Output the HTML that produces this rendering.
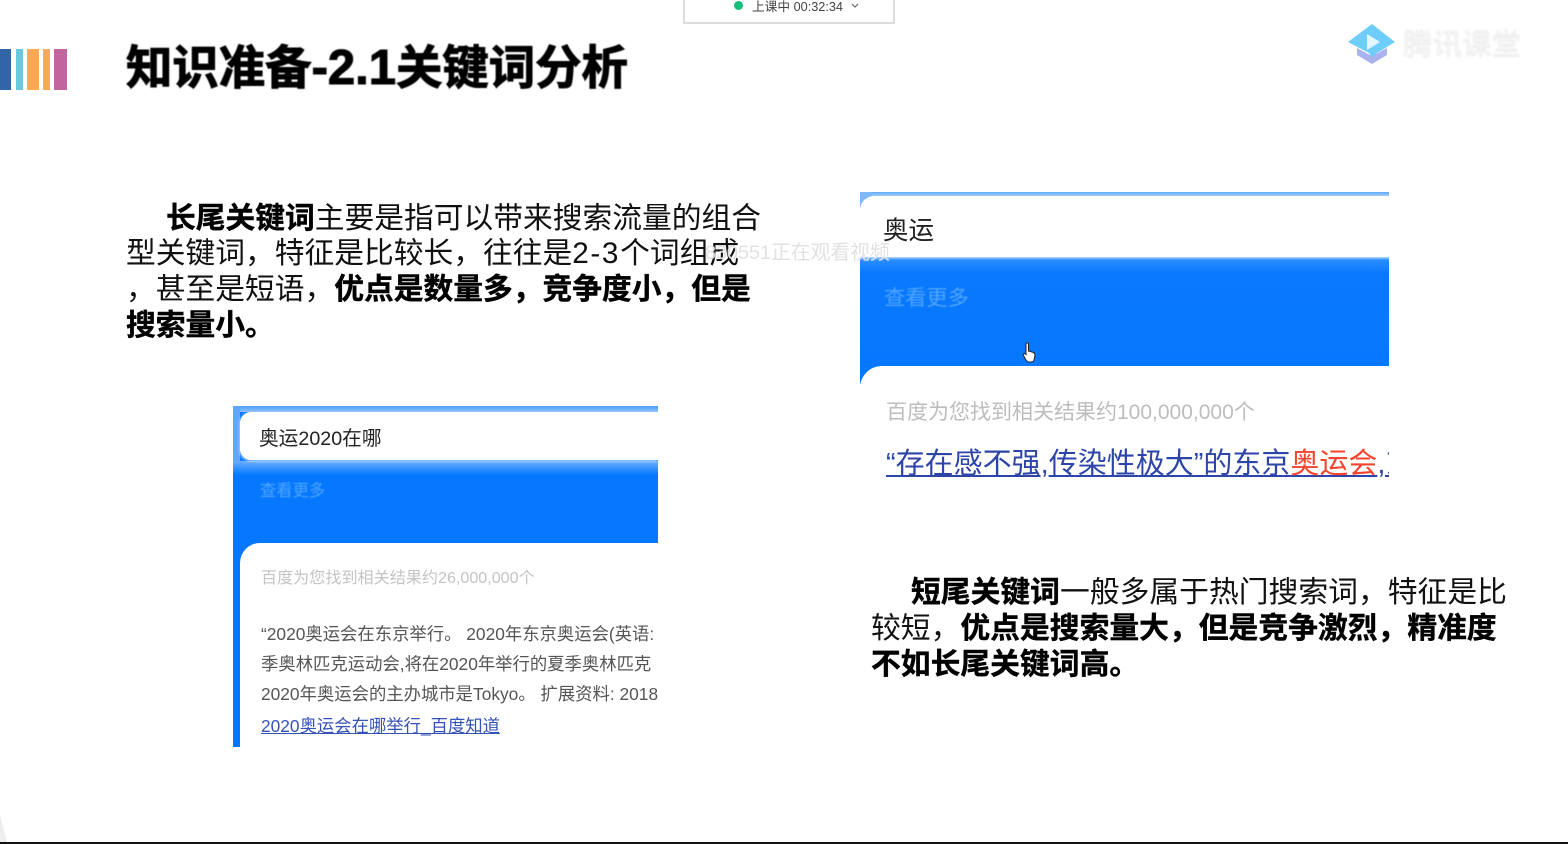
<!DOCTYPE html>
<html lang="zh">
<head>
<meta charset="utf-8">
<title>知识准备</title>
<style>
html,body{margin:0;padding:0;background:#fff}
#p{position:relative;width:1568px;height:844px;overflow:hidden;background:#fff;font-family:"Liberation Sans","Noto Sans CJK SC",sans-serif;color:#111}
.a{position:absolute;white-space:nowrap}
.t{font-size:29.75px;line-height:36px;color:#111;filter:blur(.35px)}
.t b{font-weight:700;color:#000;-webkit-text-stroke:.4px #000}
</style>
</head>
<body>
<div id="p">
  <!-- top timer -->
  <div class="a" style="left:683px;top:-3px;width:208px;height:23px;background:#fff;border:2px solid #dcdcdc"></div>
  <div class="a" style="left:734px;top:1px;width:9px;height:9px;border-radius:50%;background:#12c07c"></div>
  <div class="a" style="left:752px;top:0;font-size:12.7px;line-height:15px;color:#444;filter:blur(.3px)">上课中 00:32:34</div>
  <svg class="a" style="left:851px;top:3px" width="8" height="6" viewBox="0 0 8 6"><path d="M1 1l3 3 3-3" fill="none" stroke="#666" stroke-width="1.2"/></svg>

  <!-- colour bars -->
  <div class="a" style="left:0;top:49px;width:11px;height:41px;background:#3265a8"></div>
  <div class="a" style="left:16px;top:49px;width:7px;height:41px;background:#6cc8dc"></div>
  <div class="a" style="left:27px;top:49px;width:12px;height:41px;background:#ffa952"></div>
  <div class="a" style="left:43px;top:49px;width:7px;height:41px;background:#ffa952"></div>
  <div class="a" style="left:54px;top:49px;width:13px;height:41px;background:#c2659c"></div>

  <!-- title -->
  <div class="a" style="left:126px;top:38px;font-size:46.4px;line-height:60px;font-weight:700;color:#000;-webkit-text-stroke:1.1px #000;filter:blur(.4px)">知识准备<span style="font-size:49px">-2.1</span>关键词分析</div>

  <!-- logo -->
  <svg class="a" style="left:1347px;top:22px" width="50" height="44" viewBox="0 0 50 44">
    <path d="M10 26L25 34 40 26V33L25 42 10 33Z" fill="#a9b4ee"/>
    <path d="M25 2L48 20 30 31 25 35 22 31 1 20Z" fill="#6fcdfb"/>
    <path d="M20 12L33 20 20 28Z" fill="#e4f6ff"/>
  </svg>
  <div class="a" style="left:1403px;top:23px;font-size:29.5px;line-height:44px;color:#f4f4f4;text-shadow:0 1px 2px #e2e2e2;filter:blur(.4px)">腾讯课堂</div>

  <!-- long-tail text -->
  <div class="a t" style="left:166px;top:201px"><b>长尾关键词</b>主要是指可以带来搜索流量的组合</div>
  <div class="a t" style="left:126px;top:236px">型关键词，特征是比较长，往往是<span style="letter-spacing:1.6px">2-3</span>个词组成</div>
  <div class="a t" style="left:126px;top:272px">，甚至是短语，<b>优点是数量多，竞争度小，但是</b></div>
  <div class="a t" style="left:126px;top:308px"><b>搜索量小。</b></div>

  <!-- right card -->
  <div class="a" style="left:860px;top:192px;width:529px;height:192px;overflow:hidden;background:#fff">
    <div class="a" style="left:0;top:0;width:529px;height:5px;background:linear-gradient(#5ea8f8,#b5d6fb)"></div>
    <div class="a" style="left:0;top:0;width:12px;height:22px;background:#7db8f8"></div>
    <div class="a" style="left:0;top:4px;width:529px;height:62px;background:#fff;border-radius:14px 0 0 0"></div>
    <div class="a" style="left:0;top:65px;width:529px;height:109px;background:linear-gradient(#b9d9fb 0,#2a8dff 3px,#0a78ff 16px,#0678ff 100%)"></div>
    <div class="a" style="left:0;top:174px;width:20px;height:18px;background:#0678ff"></div>
    <div class="a" style="left:0;top:174px;width:529px;height:30px;background:#fff;border-radius:22px 0 0 0"></div>
  </div>
  <div class="a" style="left:883px;top:215px;font-size:25.5px;line-height:32px;color:#222;filter:blur(.35px)">奥运</div>
  <div class="a" style="left:884px;top:285px;font-size:21.2px;line-height:28px;color:#4fa5ff;filter:blur(.4px)">查看更多</div>
  <div class="a" style="left:886px;top:399px;font-size:21px;line-height:28px;color:#bdbdbd;filter:blur(.3px)">百度为您找到相关结果约100,000,000个</div>
  <div class="a" style="left:886px;top:446px;width:503px;overflow:hidden;font-size:29px;line-height:36px;color:#2d45a8;text-decoration:underline;filter:blur(.3px)">“存在感不强,传染性极大”的东京<span style="color:#f5452f">奥运会</span>,东京</div>

  <!-- cursor -->
  <svg class="a" style="left:1022px;top:342px" width="14" height="21" viewBox="0 0 14 21">
    <path d="M4 2c0-1.500 2.500-1.500 2.500 0V9l5 1.500c1 .5 1.500 1 1.500 2.500L12 18c-.5 1.500-1.500 2-3 2H7c-1.500 0-2.200-.7-3-2L1.500 13.500c-.8-1.500 1-2.500 2.500-1z" fill="#fff" stroke="#222" stroke-width="1"/>
  </svg>

  <!-- left card -->
  <div class="a" style="left:233px;top:406px;width:425px;height:341px;overflow:hidden;background:#0678ff">
    <div class="a" style="left:0;top:0;width:425px;height:6px;background:linear-gradient(#4f9ffb,#8cc0fc)"></div>
    <div class="a" style="left:0;top:0;width:7px;height:60px;background:#5ea8fb"></div>
    <div class="a" style="left:0;top:55px;width:425px;height:14px;background:linear-gradient(#6aaeff,#0678ff)"></div>
    <div class="a" style="left:7px;top:6px;width:418px;height:48px;background:#fff;border-radius:11px 0 0 11px;box-shadow:0 1px 3px #cfe3fb"></div>
    <div class="a" style="left:7px;top:137px;width:418px;height:204px;background:#fff;border-radius:20px 0 0 0"></div>
  </div>
  <div class="a" style="left:259px;top:425px;font-size:19.7px;line-height:28px;color:#222;filter:blur(.3px)">奥运2020在哪</div>
  <div class="a" style="left:260px;top:478px;font-size:16.3px;line-height:26px;color:#4fa5ff;filter:blur(.4px)">查看更多</div>
  <div class="a" style="left:261px;top:565px;font-size:16.1px;line-height:26px;color:#c4c4c4;filter:blur(.3px)">百度为您找到相关结果约26,000,000个</div>
  <div class="a" style="left:261px;top:621px;width:397px;overflow:hidden;font-size:17.35px;line-height:26px;color:#555;filter:blur(.3px)">“2020奥运会在东京举行。 2020年东京奥运会(英语:</div>
  <div class="a" style="left:261px;top:651px;width:397px;overflow:hidden;font-size:17.35px;line-height:26px;color:#555;filter:blur(.3px)">季奥林匹克运动会,将在2020年举行的夏季奥林匹克</div>
  <div class="a" style="left:261px;top:681px;width:397px;overflow:hidden;font-size:17.35px;line-height:26px;color:#555;filter:blur(.3px)">2020年奥运会的主办城市是Tokyo。 扩展资料: 2018</div>
  <div class="a" style="left:261px;top:713px;font-size:17.35px;line-height:26px;color:#3552b8;text-decoration:underline;filter:blur(.3px)">2020奥运会在哪举行_百度知道</div>

  <!-- short-tail text -->
  <div class="a t" style="left:911px;top:575px;font-size:29.8px"><b>短尾关键词</b>一般多属于热门搜索词，特征是比</div>
  <div class="a t" style="left:871px;top:611px;font-size:29.8px">较短，<b>优点是搜索量大，但是竞争激烈，精准度</b></div>
  <div class="a t" style="left:871px;top:647px;font-size:29.8px"><b>不如长尾关键词高。</b></div>

  <!-- watermark -->
  <div class="a" style="left:705px;top:239px;font-size:19.8px;line-height:28px;color:rgba(222,222,222,.9);text-shadow:0 0 1px rgba(255,255,255,.8);filter:blur(.35px)">830551正在观看视频</div>

  <!-- bottom -->
  <div class="a" style="left:0;top:815px;width:0;height:0;border-left:7px solid #eee;border-top:27px solid transparent"></div>
  <div class="a" style="left:0;top:842px;width:1568px;height:2px;background:#111"></div>
</div>
</body>
</html>
